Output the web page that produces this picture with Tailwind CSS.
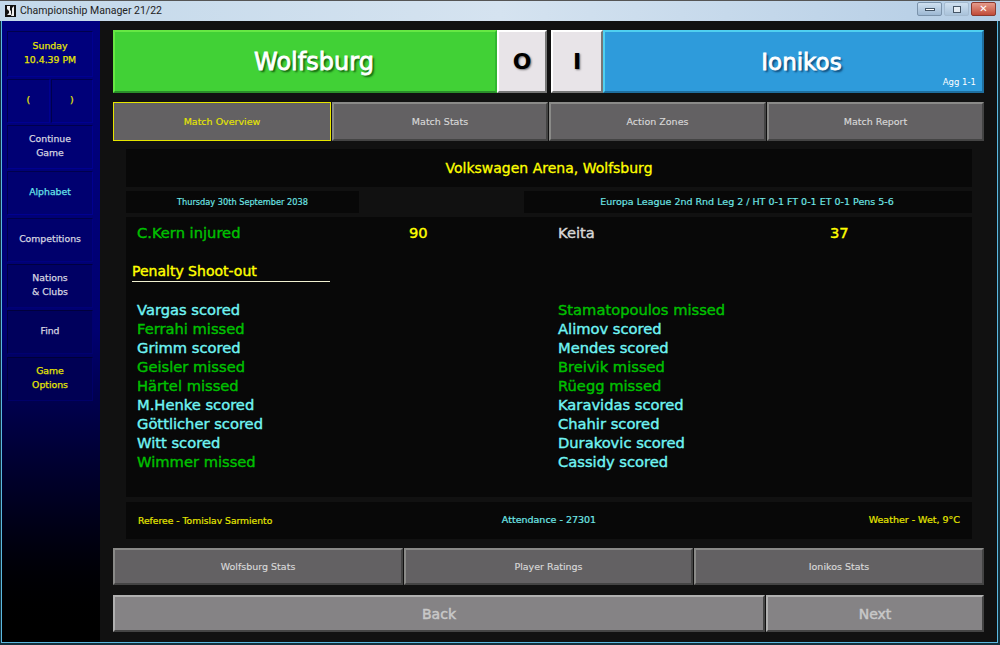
<!DOCTYPE html>
<html lang="en">
  <head>
    <meta charset="UTF-8" />
    <title>Championship Manager 21/22</title>
    <script src="https://cdn.jsdelivr.net/npm/@tailwindcss/browser@4"></script>
  </head>
  <body class="w-[1000px] h-[645px] overflow-hidden bg-[#14303c] font-['DejaVu_Sans',sans-serif]">
    <!-- window title bar -->
    <div class="h-[21px] flex items-center pl-[5px] pr-[4px] border-t border-[#555] bg-gradient-to-r from-[#c3d8ea] via-[#d5e3f0] to-[#b4cde5]">
      <svg width="11" height="12" viewBox="0 0 11 12" class="mr-[4px]">
        <rect width="11" height="12" fill="#111" />
        <path d="M2 1h3v4l1 1v4H2l2-2V6L2 4zM9 1L7 3v5l-1 3h3z" fill="#eee" />
      </svg>
      <span class="text-[10.5px] text-[#222] font-['Roboto',sans-serif]">Championship Manager 21/22</span>
      <div class="ml-auto flex gap-[2px] -mt-[4px]">
        <div class="w-[25px] h-[14px] rounded-[2px] border border-[#7b93ab] bg-gradient-to-b from-[#cfe0f0] to-[#9db8d3] flex items-center justify-center"><div class="w-[10px] h-[3px] bg-white border border-[#456]"></div></div>
        <div class="w-[25px] h-[14px] rounded-[2px] border border-[#a5bbd0] bg-gradient-to-b from-[#cfe0f0] to-[#a9c2da] flex items-center justify-center"><div class="w-[8px] h-[7px] bg-white/60 border border-[#456]"></div></div>
        <div class="w-[25px] h-[14px] rounded-[2px] border border-[#8a3a30] bg-gradient-to-b from-[#e59a8b] to-[#c04a38] flex items-center justify-center text-white text-[10px] font-bold leading-none">✕</div>
      </div>
    </div>

    <div class="h-[622px] ml-px mr-[2px] flex bg-[#111111] border-x border-b border-[#5bb8e0]">
      <!-- sidebar -->
      <aside class="w-[98px] shrink-0 h-full bg-gradient-to-b from-[#000080] via-[#000070] to-black pl-[5px] pr-[7px] pt-[10px] flex flex-col gap-[2px] text-[9.3px] text-center leading-[14px] [-webkit-text-stroke:0.25px]">
        <div class="h-[46px] pb-[2px] border border-[#000090] border-t-[#00004c] border-l-[#00004c] bg-[#00007c] flex flex-col justify-center text-[#e6e600]"><span>Sunday</span><span>10.4.39 PM</span></div>
        <div class="h-[44px] flex gap-px text-[#e6e600]">
          <div class="flex-1 pb-[2px] border border-[#000090] border-t-[#00004c] border-l-[#00004c] bg-[#000078] flex items-center justify-center">(</div>
          <div class="flex-1 pb-[2px] border border-[#000090] border-t-[#00004c] border-l-[#00004c] bg-[#000078] flex items-center justify-center">)</div>
        </div>
        <div class="h-[44px] pb-[2px] border border-[#000090] border-t-[#00004c] border-l-[#00004c] bg-[#000074] flex flex-col justify-center text-[#d6d6e0]"><span>Continue</span><span>Game</span></div>
        <div class="h-[44px] pb-[2px] border border-[#000090] border-t-[#00004c] border-l-[#00004c] bg-[#000070] flex items-center justify-center text-[#66e0e8]">Alphabet</div>
        <div class="h-[44px] pb-[2px] mt-px border border-[#000080] border-t-[#000048] border-l-[#000048] bg-[#00006c] flex items-center justify-center text-[#d6d6e0]">Competitions</div>
        <div class="h-[44px] pb-[2px] border border-[#000078] border-t-[#000040] border-l-[#000040] bg-[#000064] flex flex-col justify-center text-[#d6d6e0]"><span>Nations</span><span>&amp; Clubs</span></div>
        <div class="h-[44px] pb-[2px] border border-[#000070] border-t-[#00003c] border-l-[#00003c] bg-[#00005c] flex items-center justify-center text-[#d6d6e0]">Find</div>
        <div class="h-[44px] pb-[2px] mt-px border border-[#000068] border-t-[#000038] border-l-[#000038] bg-[#000054] flex flex-col justify-center text-[#e6e600]"><span>Game</span><span>Options</span></div>
      </aside>

      <!-- main area -->
      <main class="w-[897px] shrink-0 pl-[13px] pr-[13px] pt-[9px] flex flex-col">
        <!-- score header -->
        <div class="h-[63px] flex text-white">
          <div class="w-[384px] pl-[18px] pt-px border-2 border-[#2fb82f] border-t-[#66e844] border-l-[#66e844] border-b-[#2a8f2a] bg-[#41d136] flex items-center justify-center text-[24px] [-webkit-text-stroke:0.8px] [text-shadow:2px_2px_2px_rgba(0,60,0,0.8)]">Wolfsburg</div>
          <div class="w-[50px] border-2 border-t-white border-l-white border-r-[#777] border-b-[#777] bg-[#e8e4e8] flex items-center justify-center text-black text-[22px] font-bold [text-shadow:1px_1px_2px_rgba(0,0,0,0.5)]">O</div>
          <div class="w-[4px] bg-[#111]"></div>
          <div class="w-[52px] border-2 border-t-white border-l-white border-r-[#777] border-b-[#777] bg-[#e8e4e8] flex items-center justify-center text-black text-[22px] font-bold [text-shadow:1px_1px_2px_rgba(0,0,0,0.5)]">I</div>
          <div class="relative w-[381px] pl-[16px] pt-px border-2 border-t-[#4fd0f0] border-l-[#4fd0f0] border-r-[#1f6f9f] border-b-[#1f6f9f] bg-[#2e9bdb] flex items-center justify-center text-[23px] [-webkit-text-stroke:0.8px] [text-shadow:2px_2px_2px_rgba(0,40,80,0.8)]">
            Ionikos
            <span class="absolute right-[6px] bottom-[2px] text-[8.5px] [-webkit-text-stroke:0] [text-shadow:none]">Agg 1-1</span>
          </div>
        </div>

        <!-- tabs -->
        <div class="mt-[9px] h-[39px] flex gap-px text-[9.5px] text-[#d8d8d8] [-webkit-text-stroke:0.15px]">
          <div class="w-[218px] pt-px border border-[#e6e600] bg-[#636163] flex items-center justify-center text-[#e6e600]">Match Overview</div>
          <div class="w-[216px] pt-px border-2 border-t-[#8a8a88] border-l-[#8a8a88] border-r-[#444] border-b-[#444] bg-[#636163] flex items-center justify-center">Match Stats</div>
          <div class="w-[217px] pt-px border-2 border-t-[#8a8a88] border-l-[#8a8a88] border-r-[#444] border-b-[#444] bg-[#636163] flex items-center justify-center">Action Zones</div>
          <div class="w-[217px] pt-px border-2 border-t-[#8a8a88] border-l-[#8a8a88] border-r-[#444] border-b-[#444] bg-[#636163] flex items-center justify-center">Match Report</div>
        </div>

        <!-- match panel -->
        <div class="ml-[13px] w-[846px] mt-[8px] flex flex-col">
          <div class="h-[38px] bg-[#080808] flex items-center justify-center text-[14px] text-[#ffff00] [-webkit-text-stroke:0.3px]">Volkswagen Arena, Wolfsburg</div>
          <div class="mt-[4px] h-[22px] flex items-center text-[#70e8e8] [-webkit-text-stroke:0.15px]">
            <div class="w-[233px] h-full bg-[#080808] flex items-center justify-center text-[8.2px]">Thursday 30th September 2038</div>
            <div class="w-[448px] ml-[165px] pr-[2px] h-full bg-[#080808] flex items-center justify-center text-[9.5px]">Europa League 2nd Rnd Leg 2 / HT 0-1 FT 0-1 ET 0-1 Pens 5-6</div>
          </div>

          <div class="mt-[4px] h-[280px] bg-[#080808] [-webkit-text-stroke:0.4px]">
            <div class="grid grid-cols-[272px_149px_272px_1fr] pl-[11px] pt-[6px] h-[19px] box-content text-[14.7px] leading-[19px]">
              <span class="text-[#00c000]">C.Kern injured</span>
              <span class="text-[#ffff00]">90</span>
              <span class="text-[#d8d8d8]">Keita</span>
              <span class="text-[#ffff00]">37</span>
            </div>
            <div class="ml-[6px] mt-[20px] w-[198px] h-[20px] border-b border-[#f0f0d0] text-[14px] leading-[18px] text-[#ffff00]">Penalty Shoot-out</div>
            <div class="grid grid-cols-[421px_1fr] pl-[11px] mt-[18px] text-[14.7px] leading-[19px] text-[#70f4f4]">
              <div class="flex flex-col">
                <span>Vargas scored</span>
                <span class="text-[#00c000]">Ferrahi missed</span>
                <span>Grimm scored</span>
                <span class="text-[#00c000]">Geisler missed</span>
                <span class="text-[#00c000]">Härtel missed</span>
                <span>M.Henke scored</span>
                <span>Göttlicher scored</span>
                <span>Witt scored</span>
                <span class="text-[#00c000]">Wimmer missed</span>
              </div>
              <div class="flex flex-col">
                <span class="text-[#00c000]">Stamatopoulos missed</span>
                <span>Alimov scored</span>
                <span>Mendes scored</span>
                <span class="text-[#00c000]">Breivik missed</span>
                <span class="text-[#00c000]">Rüegg missed</span>
                <span>Karavidas scored</span>
                <span>Chahir scored</span>
                <span>Durakovic scored</span>
                <span>Cassidy scored</span>
              </div>
            </div>
          </div>

          <div class="mt-[5px] h-[37px] bg-[#080808] px-[12px] grid grid-cols-3 items-center text-[9.2px] [-webkit-text-stroke:0.2px]">
            <span class="text-[#e6e600]">Referee - Tomislav Sarmiento</span>
            <span class="text-[#70e8e8] text-center text-[9.5px]">Attendance - 27301</span>
            <span class="text-[#e6e600] text-right text-[9.5px]">Weather - Wet, 9°C</span>
          </div>
        </div>

        <!-- lower buttons -->
        <div class="mt-[9px] h-[37px] flex gap-px text-[9.5px] text-[#d8d8d8] [-webkit-text-stroke:0.15px]">
          <div class="w-[290px] pt-px border-2 border-t-[#8a8a88] border-l-[#8a8a88] border-r-[#444] border-b-[#444] bg-[#636163] flex items-center justify-center">Wolfsburg Stats</div>
          <div class="w-[289px] pt-px border-2 border-t-[#8a8a88] border-l-[#8a8a88] border-r-[#444] border-b-[#444] bg-[#636163] flex items-center justify-center">Player Ratings</div>
          <div class="w-[290px] pt-px border-2 border-t-[#8a8a88] border-l-[#8a8a88] border-r-[#444] border-b-[#444] bg-[#636163] flex items-center justify-center">Ionikos Stats</div>
        </div>
        <div class="mt-[10px] h-[37px] flex gap-px text-[14px] text-[#c8c8c8] [-webkit-text-stroke:0.5px]">
          <div class="w-[652px] pt-px border-2 border-t-[#b0b0b0] border-l-[#b0b0b0] border-r-[#444] border-b-[#444] bg-[#858385] flex items-center justify-center">Back</div>
          <div class="w-[218px] pt-px border-2 border-t-[#b0b0b0] border-l-[#b0b0b0] border-r-[#444] border-b-[#444] bg-[#858385] flex items-center justify-center">Next</div>
        </div>
      </main>
    </div>
  </body>
</html>
